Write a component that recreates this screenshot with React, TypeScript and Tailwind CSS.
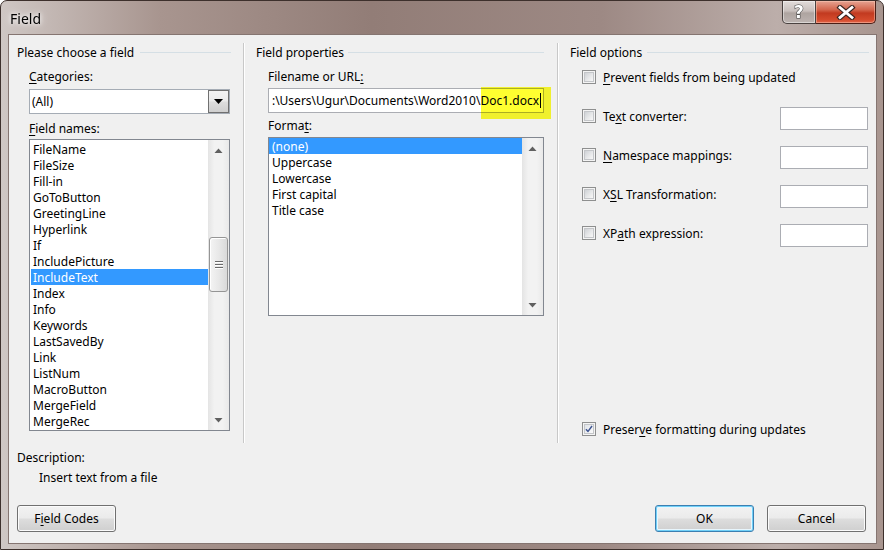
import React from "react";

function U({ c }: { c: string }) {
  return <span className="underline decoration-1 underline-offset-[2px]">{c}</span>;
}

function Arrow({ up }: { up?: boolean }) {
  return (
    <svg width="9" height="5" viewBox="0 0 9 5">
      {up ? (
        <polygon points="0.5,5 4.5,0.5 8.5,5" fill="#606060" />
      ) : (
        <polygon points="0.5,0 4.5,4.5 8.5,0" fill="#606060" />
      )}
    </svg>
  );
}

function ScrollBar({ children }: { children?: React.ReactNode }) {
  return (
    <div className="w-[21px] h-full flex flex-col shrink-0 bg-[linear-gradient(90deg,#e4e4e4,#f2f2f2_30%,#f2f2f2_70%,#e9e9e9)]">
      <div className="h-[20px] flex items-center justify-center shrink-0">
        <Arrow up />
      </div>
      <div className="flex-1">{children}</div>
      <div className="h-[20px] flex items-center justify-center shrink-0">
        <Arrow />
      </div>
    </div>
  );
}

function Thumb() {
  return (
    <div className="mt-[77px] h-[55px] mx-[1px] rounded-[3px] border border-[#959595] bg-[linear-gradient(90deg,#f4f4f4,#e8e8e8_50%,#d9d9d9)] shadow-[inset_1px_1px_0_#ffffff] flex flex-col items-center justify-center gap-[2px]">
      <div className="w-[8px] h-px bg-[#6a6a6a] shadow-[0_1px_0_#ffffff]" />
      <div className="w-[8px] h-px bg-[#6a6a6a] shadow-[0_1px_0_#ffffff]" />
      <div className="w-[8px] h-px bg-[#6a6a6a] shadow-[0_1px_0_#ffffff]" />
    </div>
  );
}

function Item({ t, sel, pad }: { t: string; sel?: boolean; pad?: boolean }) {
  return (
    <div
      className={
        (pad ? "pl-[3px] " : "pl-[2px] ") +
        "h-[16px] leading-[18px] whitespace-nowrap " +
        (sel ? "bg-[#3399ff] text-white" : "")
      }
    >
      {t}
    </div>
  );
}

function Check({ checked }: { checked?: boolean }) {
  return (
    <div className="mt-[1px] w-[14px] h-[14px] shrink-0 border border-[#8e8f8f] bg-[#f4f4f4] p-[1px]">
      <div
        className={
          "w-full h-full border border-[#c4c6c9] flex items-center justify-center " +
          (checked
            ? "bg-[linear-gradient(135deg,#dfe3e8,#fbfbfb)]"
            : "bg-[linear-gradient(135deg,#cfd2d6,#e9eaeb_60%,#f7f7f7)]")
        }
      >
        {checked && (
          <svg width="10" height="10" viewBox="0 0 10 10">
            <path d="M1.2 5.2 L3.8 8 L8.8 1.2" fill="none" stroke="#3f5590" strokeWidth="1.8" strokeLinejoin="round" />
          </svg>
        )}
      </div>
    </div>
  );
}

function Heading({ text, ml, pl, pr }: { text: string; ml: string; pl: string; pr: string }) {
  return (
    <div className={"pt-[1px] flex items-center " + pl + " " + pr}>
      <span className="h-[16px] whitespace-nowrap">{text}</span>
      <div className={"flex-1 h-px bg-[#d5dfe5] " + ml} />
    </div>
  );
}

function Button({ children, def }: { children: React.ReactNode; def?: boolean }) {
  return (
    <div
      className={
        "w-[99px] h-[27px] rounded-[3px] border flex items-center justify-center bg-[linear-gradient(#f2f2f2,#ebebeb_48%,#dddddd_52%,#cfcfcf)] " +
        (def
          ? "border-[#3c7fb1] shadow-[inset_0_0_0_1px_#70d0f8,inset_0_0_0_2px_#e8f6fd]"
          : "border-[#707070] shadow-[inset_0_0_0_1px_#fbfbfb]")
      }
    >
      {children}
    </div>
  );
}

const leftItems = [
  "FileName",
  "FileSize",
  "Fill-in",
  "GoToButton",
  "GreetingLine",
  "Hyperlink",
  "If",
  "IncludePicture",
  "IncludeText",
  "Index",
  "Info",
  "Keywords",
  "LastSavedBy",
  "Link",
  "ListNum",
  "MacroButton",
  "MergeField",
  "MergeRec",
];

const formatItems = ["(none)", "Uppercase", "Lowercase", "First capital", "Title case"];

export default function App() {
  return (
    <div className="w-[884px] h-[550px] overflow-hidden font-['Noto_Sans',sans-serif] text-[12px] leading-[18px] text-black">
      <div className="w-[884px] h-[550px] rounded-t-[7px] border border-[#3d302c] bg-[linear-gradient(90deg,#cfc7c4_0%,#a8958f_18%,#927d77_42%,#9d8984_68%,#bcaeaa_88%,#a8958f_100%)] flex flex-col">
        {/* Title bar */}
        <div className="h-[33px] shrink-0 flex items-start">
          <div className="pl-[9px] pt-[8px] text-[14px] leading-[20px] [text-shadow:0_0_8px_#ffffff,0_0_4px_#ffffff]">
            Field
          </div>
          <div className="ml-auto mr-[7px] flex">
            <div className="w-[34px] h-[23px] rounded-bl-[5px] border border-t-0 border-[#4a4240] bg-[linear-gradient(#e2dcda,#c9c0bd_45%,#aea4a0_55%,#bdb4b1)] shadow-[inset_0_0_0_1px_rgba(255,255,255,0.45)] flex items-center justify-center">
              <span className="text-[17px] leading-[20px] font-bold font-['DejaVu_Sans',sans-serif] text-white [-webkit-text-stroke:1px_#3a3a3a] [paint-order:stroke_fill]">
                ?
              </span>
            </div>
            <div className="w-[60px] h-[23px] rounded-br-[5px] border border-t-0 border-l-0 border-[#4a1e16] bg-[linear-gradient(#e6a392,#d3654c_40%,#c23a20_55%,#d44a2c_85%,#e2654a)] shadow-[inset_0_0_0_1px_rgba(255,210,190,0.45)] flex items-center justify-center">
              <svg width="20" height="15" viewBox="0 0 20 15">
                <path d="M4 2.5 L16 12.5 M16 2.5 L4 12.5" stroke="#3a2420" strokeWidth="5" strokeLinecap="square" />
                <path d="M4 2.5 L16 12.5 M16 2.5 L4 12.5" stroke="#ffffff" strokeWidth="2.8" strokeLinecap="square" />
              </svg>
            </div>
          </div>
        </div>

        {/* Client area */}
        <div className="ml-[7px] w-[869px] h-[510px] border border-[#857571] bg-[#f0f0f0] flex flex-col">
          <div className="mt-[8px] h-[400px] flex shrink-0">
            {/* Left column */}
            <div className="w-[234px] flex flex-col">
              <Heading text="Please choose a field" ml="ml-[6px]" pl="pl-[8px]" pr="pr-[12px]" />
              <div className="pl-[20px] flex flex-col">
                <div className="mt-[8px] h-[16px]">
                  <U c="C" />
                  ategories:
                </div>
                <div className="mt-[5px] w-[201px] h-[25px] border border-[#a5acb5] bg-white flex">
                  <div className="flex-1 pl-[2px] flex items-center">(All)</div>
                  <div className="w-[21px] h-full border border-[#707070] bg-[linear-gradient(#f2f2f2,#ebebeb_48%,#dddddd_52%,#cfcfcf)] flex items-center justify-center">
                    <svg width="9" height="5" viewBox="0 0 9 5">
                      <polygon points="0,0 9,0 4.5,5" fill="#000000" />
                    </svg>
                  </div>
                </div>
                <div className="mt-[6px] h-[16px]">
                  <U c="F" />
                  ield names:
                </div>
                <div className="mt-[3px] w-[201px] h-[292px] border border-[#828790] bg-white flex overflow-hidden">
                  <div className="flex-1 pt-[1px] pl-[1px] overflow-hidden">
                    {leftItems.map((t) => (
                      <Item key={t} t={t} sel={t === "IncludeText"} />
                    ))}
                  </div>
                  <ScrollBar>
                    <Thumb />
                  </ScrollBar>
                </div>
              </div>
            </div>

            {/* Middle column */}
            <div className="w-[314px] border-l border-[#c8c8c8] shadow-[inset_1px_0_0_#ffffff] flex flex-col">
              <Heading text="Field properties" ml="ml-[4px]" pl="pl-[12px]" pr="pr-[13px]" />
              <div className="pl-[24px] flex flex-col">
                <div className="mt-[8px] h-[16px]">
                  Filename or URL
                  <U c=":" />
                </div>
                <div className="relative mt-[4px] w-[276px] h-[25px]">
                  <div className="w-full h-full border border-[#abadb3] bg-white flex items-center justify-end overflow-hidden pr-[2px]">
                    <span className="whitespace-nowrap">:\Users\Ugur\Documents\Word2010\Doc1.docx</span>
                    <span className="w-px h-[15px] bg-black ml-[1px]" />
                  </div>
                  <div className="absolute left-[213px] top-[-1px] w-[70px] h-[32px] bg-[#ffff30] mix-blend-multiply" />
                </div>
                <div className="mt-[4px] h-[16px]">
                  Forma
                  <U c="t" />:
                </div>
                <div className="mt-[4px] w-[276px] h-[179px] border border-[#828790] bg-white flex overflow-hidden">
                  <div className="flex-1 overflow-hidden">
                    {formatItems.map((t) => (
                      <Item key={t} t={t} sel={t === "(none)"} pad />
                    ))}
                  </div>
                  <ScrollBar />
                </div>
              </div>
            </div>

            {/* Right column */}
            <div className="flex-1 border-l border-[#c8c8c8] shadow-[inset_1px_0_0_#ffffff] flex flex-col pb-[6px]">
              <Heading text="Field options" ml="ml-[5px]" pl="pl-[12px]" pr="pr-[7px]" />
              <div className="pl-[24px] pr-[8px] flex flex-col flex-1">
                <div className="mt-[9px] h-[16px] flex items-start">
                  <Check />
                  <span className="ml-[7px]">
                    <U c="P" />
                    revent fields from being updated
                  </span>
                </div>
                <div className="mt-[22px] flex flex-col gap-[16px]">
                  {[
                    ["Te", "x", "t converter:"],
                    ["", "N", "amespace mappings:"],
                    ["X", "S", "L Transformation:"],
                    ["XP", "a", "th expression:"],
                  ].map(([a, b, c]) => (
                    <div key={b + c} className="h-[23px] flex items-start">
                      <div className="mt-[1px] h-[16px] flex items-start">
                        <Check />
                        <span className="ml-[7px]">
                          {a}
                          <U c={b} />
                          {c}
                        </span>
                      </div>
                      <div className="ml-auto w-[88px] h-[23px] border border-[#abadb3] bg-white" />
                    </div>
                  ))}
                </div>
                <div className="mt-auto h-[16px] flex items-start">
                  <Check checked />
                  <span className="ml-[7px]">
                    Preser
                    <U c="v" />e formatting during updates
                  </span>
                </div>
              </div>
            </div>
          </div>

          {/* Description */}
          <div className="mt-[6px] pl-[8px] h-[16px]">Description:</div>
          <div className="mt-[4px] pl-[30px] h-[16px]">Insert text from a file</div>

          {/* Buttons */}
          <div className="mt-[20px] pl-[8px] pr-[10px] flex items-center">
            <Button>
              <span>
                F<U c="i" />
                eld Codes
              </span>
            </Button>
            <div className="ml-auto flex gap-[13px]">
              <Button def>OK</Button>
              <Button>Cancel</Button>
            </div>
          </div>
        </div>
      </div>
    </div>
  );
}
